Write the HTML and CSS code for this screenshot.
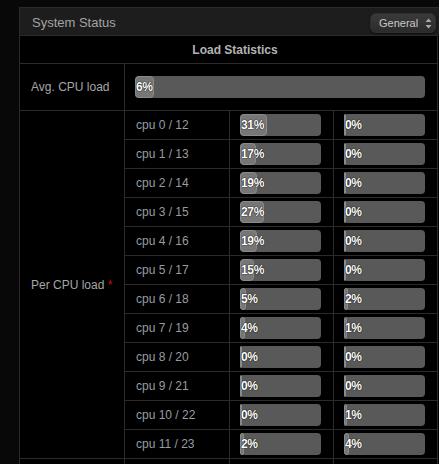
FILE: index.html
```html
<!DOCTYPE html>
<html lang="en">
<head>
  <meta charset="UTF-8" />
  <title>System Status</title>
  <link rel="stylesheet" href="styles.css">
</head>
<body>
  <div class="panel">
    <div class="panel-head">
      <span class="panel-title">System Status</span>
      <div class="picker">
        <span>General</span>
        <svg width="7" height="11" viewBox="0 0 7 11"><path d="M3.5 0.5 L6.5 4 L0.5 4 Z M3.5 10.5 L6.5 7 L0.5 7 Z" fill="#aaa"/></svg>
      </div>
    </div>

    <table class="stats">
      <colgroup>
        <col class="c-label"><col class="c-cpu"><col class="c-bar"><col class="c-bar">
      </colgroup>
      <tr class="head-row">
        <th colspan="4">Load Statistics</th>
      </tr>
      <tr class="avg-row">
        <td class="label">Avg. CPU load</td>
        <td colspan="3" class="bar-cell"><div class="bar"><div class="fill" style="width:6%"></div><span>6%</span></div></td>
      </tr>
      <tbody id="cpus"></tbody>
    </table>
  </div>

  <script>
    // user / system load per logical cpu
    const cpus = [
      [31, 0], [17, 0], [19, 0], [27, 0], [19, 0], [15, 0],
      [5, 2], [4, 1], [0, 0], [0, 0], [0, 1], [2, 4]
    ];

    const bar = (v) => `<div class="bar"><div class="fill" style="width:${v}%"></div><span>${v}%</span></div>`;

    let rows = '';
    cpus.forEach((c, i) => {
      rows += '<tr class="cpu-row">';
      if (i === 0) {
        rows += `<td class="label" rowspan="${cpus.length}">Per CPU load <span class="req">*</span></td>`;
      }
      rows += `<td class="cpu">cpu ${i} / ${i + 12}</td>`;
      rows += `<td class="bar-cell">${bar(c[0])}</td><td class="bar-cell">${bar(c[1])}</td>`;
      rows += '</tr>';
    });
    rows += '<tr class="cpu-row"><td></td><td></td><td></td><td></td></tr>';
    document.getElementById('cpus').innerHTML = rows;
  </script>
</body>
</html>
```

FILE: styles.css
```css
body {
  margin: 0;
  background: #080808;
  font-family: 'Liberation Sans', Arial, sans-serif;
  color: #a6a6a6;
  overflow: hidden;
}

.panel {
  margin: 7px 0 0 19px;
  width: 430px;
  background: #000;
}

.panel-head {
  height: 27px;
  background: #1d1d1d;
  border-top: 1px solid #2b2b2b;
  border-left: 1px solid #2b2b2b;
  display: flex;
  align-items: center;
  justify-content: space-between;
  padding: 0 13px 0 12px;
}

.panel-title {
  font-size: 13px;
  color: #a3a3a3;
  margin-top: 1px;
}

.picker {
  box-sizing: border-box;
  display: flex;
  align-items: center;
  justify-content: space-between;
  width: 66px;
  height: 20px;
  margin-top: 3px;
  padding: 0 3px 0 8px;
  border: 1px solid #2f2f2f;
  border-radius: 6px;
  background: linear-gradient(#3a3a3a, #2b2b2b);
  box-shadow: 0 1px 2px rgba(0,0,0,0.6);
  font-size: 11px;
  color: #c8c8c8;
}

.picker svg {
  flex: none;
}

.stats {
  border-collapse: collapse;
  table-layout: fixed;
  width: 419px;
  font-size: 12px;
}

.c-label, .c-cpu { width: 105px; }
.c-bar { width: 104px; }

.stats th,
.stats td {
  border: 1px solid #2b2b2b;
  padding: 0;
}

.head-row th {
  height: 27px;
  font-weight: bold;
  color: #b4b4b4;
  padding-left: 13px;
  text-align: center;
}

.avg-row td {
  height: 46px;
}

.cpu-row td {
  height: 28px;
}

.label {
  padding-left: 11px !important;
  color: #a6a6a6;
}

.req {
  color: #d00;
}

.cpu {
  padding-left: 11px !important;
  color: #979ca2;
}

.bar-cell {
  padding: 0 12px 0 10px !important;
}

.bar {
  position: relative;
  height: 22px;
  background: #595959;
  border-radius: 4px;
}

.fill {
  height: 20px;
  background: #767676;
  border: 1px solid #8a8a8a;
  border-radius: 4px;
  max-width: calc(100% - 2px);
}

.bar span {
  position: absolute;
  left: 1px;
  top: 4px;
  font-size: 12px;
  font-weight: bold;
  letter-spacing: -0.3px;
  color: #fff;
  text-shadow: 0 0 1px #000, 0 0 1px #000;
}
```
